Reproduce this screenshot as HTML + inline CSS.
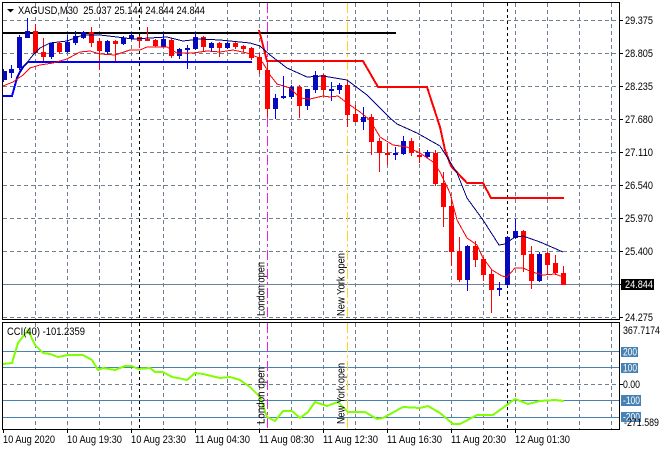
<!DOCTYPE html>
<html><head><meta charset="utf-8"><title>XAGUSD,M30</title>
<style>
html,body{margin:0;padding:0;background:#fff;width:660px;height:450px;overflow:hidden}
svg{display:block}
text{font-family:"Liberation Sans",sans-serif;font-size:11px;fill:#000}
.c{shape-rendering:crispEdges}
</style></head><body>
<svg width="660" height="450" viewBox="0 0 660 450" xmlns="http://www.w3.org/2000/svg">
<rect width="660" height="450" fill="#fff"/>
<!-- grid -->
<g class="c" fill="none" stroke="#708090" stroke-dasharray="4 3">
<path d="M35.5 3V319M67.5 3V319M99.5 3V319M131.5 3V319M163.5 3V319M195.5 3V319M227.5 3V319M259.5 3V319M291.5 3V319M323.5 3V319M355.5 3V319M387.5 3V319M419.5 3V319M451.5 3V319M483.5 3V319M515.5 3V319M547.5 3V319M579.5 3V319M611.5 3V319"/>
<path d="M3 20.500H619M3 53.500H619M3 86.500H619M3 119.500H619M3 152.500H619M3 185.500H619M3 218.500H619M3 251.500H619M3 317.500H619"/>
<path d="M35.500 323V429M67.500 323V429M99.500 323V429M131.500 323V429M163.500 323V429M195.500 323V429M227.500 323V429M259.500 323V429M291.500 323V429M323.500 323V429M355.500 323V429M387.500 323V429M419.500 323V429M451.500 323V429M483.500 323V429M515.500 323V429M547.500 323V429M579.500 323V429M611.500 323V429"/>
<path d="M3 384.500H619"/>
</g>
<path class="c" d="M3 284.500H619" stroke="#708090" fill="none"/>
<path class="c" d="M3 351.500H619M3 367.500H619M3 400.500H619M3 417.500H619" stroke="#4682b4" fill="none"/>
<!-- session lines -->
<g class="c" fill="none">
<path d="M139.500 3V319M139.500 323V429M507.500 3V319M507.500 323V429" stroke="#000" stroke-dasharray="3 3"/>
<path d="M267.500 3V319M267.500 323V429" stroke="#e81ee8" stroke-dasharray="10 3 3 3"/>
<path d="M347.500 3V319M347.500 323V429" stroke="#ffd21e" stroke-dasharray="10 3 3 3"/>
</g>
<!-- trend lines -->
<path class="c" d="M3 32H396V34H3z" fill="#000"/>
<!-- candles -->
<g class="c">
<path fill="none" stroke="#0000ff" d="M3.500 69V82M11.500 65V78M19.500 35V70M27.500 18V38M51.500 43V59M67.500 35V53M75.500 31V45M83.500 31V39M107.500 40V54M123.500 36V45M131.500 33V40M163.500 33V47M179.500 48V59M187.500 45V69M195.500 33V50M211.500 42V52M227.500 42V49M275.500 94V119M283.500 76V99M291.500 85V99M307.500 89V110M315.500 71V93M331.500 82V101M339.500 83V94M363.500 107V130M395.500 147V160M403.500 136V155M427.500 150V158M467.500 245V291M499.500 282V296M507.500 236V286M515.500 219V239M539.500 252V282"/>
<path fill="#0808c0" d="M3 71h4v9h-4zM9 69h5v4h-5zM17 37h5v31h-5zM25 31h5v7h-5zM49 43h5v14h-5zM65 42h5v10h-5zM73 36h5v7h-5zM81 32h5v6h-5zM105 41h5v11h-5zM121 38h5v6h-5zM129 35h5v4h-5zM161 39h5v8h-5zM177 49h5v7h-5zM185 48h5v2h-5zM193 37h5v12h-5zM209 43h5v5h-5zM225 43h5v5h-5zM273 98h5v11h-5zM281 96h5v2h-5zM289 87h5v10h-5zM305 89h5v17h-5zM313 75h5v15h-5zM329 89h5v2h-5zM337 85h5v5h-5zM361 117h5v5h-5zM393 153h5v2h-5zM401 141h5v13h-5zM425 152h5v5h-5zM465 246h5v34h-5zM497 288h5v2h-5zM505 237h5v48h-5zM513 231h5v7h-5zM537 254h5v27h-5z"/>
<path fill="none" stroke="#ff0000" d="M35.500 24V54M43.500 38V63M59.500 42V54M91.500 27V47M99.500 38V70M115.500 40V63M139.500 36V48M147.500 27V41M155.500 39V47M171.500 38V58M203.500 36V52M219.500 42V57M235.500 42V49M243.500 45V52M251.500 47V60M259.500 53V74M267.500 63V117M299.500 85V118M323.500 74V95M347.500 80V127M355.500 105V122M371.500 114V155M379.500 138V172M387.500 143V165M411.500 138V156M419.500 148V163M435.500 150V186M443.500 172V227M451.500 197V266M459.500 237V282M475.500 241V267M483.500 257V281M491.500 269V313M523.500 230V272M531.500 246V289M547.500 252V275M555.500 255V275M563.500 266V285"/>
<path fill="#ff0000" d="M33 31h5v22h-5zM41 52h5v5h-5zM57 43h5v9h-5zM89 32h5v11h-5zM97 41h5v10h-5zM113 41h5v3h-5zM137 37h5v4h-5zM145 39h5v2h-5zM153 40h5v6h-5zM169 40h5v16h-5zM201 37h5v10h-5zM217 43h5v5h-5zM233 43h5v4h-5zM241 46h5v3h-5zM249 48h5v10h-5zM257 57h5v13h-5zM265 70h5v39h-5zM297 87h5v19h-5zM321 75h5v15h-5zM345 85h5v30h-5zM353 114h5v8h-5zM369 117h5v25h-5zM377 141h5v12h-5zM385 153h5v2h-5zM409 141h5v12h-5zM417 155h5v2h-5zM433 153h5v31h-5zM441 183h5v24h-5zM449 206h5v46h-5zM457 251h5v29h-5zM473 246h5v14h-5zM481 259h5v16h-5zM489 274h5v16h-5zM521 231h5v24h-5zM529 254h5v27h-5zM545 253h5v12h-5zM553 263h5v10h-5zM561 273h5v12h-5z"/>
</g>
<!-- envelope thick -->
<g class="c" fill="none">
<path d="M3 96H12L17 78L22 68L28 62H252" stroke="#0000ff" stroke-width="2"/>
<path d="M259 30L267 61H363L378 87H427L440 127L445 150L451 166L467 183H483L491 198H564" stroke="#ff0000" stroke-width="2"/>
<!-- MAs -->
<path d="M17 78L23 68L33 55L40 48L50 43L67 41L83 35L100 35L117 37L133 39L150 38L167 37L183 41L200 39L220 40L230 41L250 43L260 46L270 55L287 68L307 77L323 76L347 80L367 95L390 118L397 124L417 133L440 146L447 157L457 173L467 198L483 220L499 245L505 244L515 237L523 236L540 242L563 252" stroke="#000080"/>
<path d="M3 86L13 82L23 75L30 68L40 65L53 63L67 59L80 52L90 51L100 54L115 55L130 50L140 50L147 47L167 47L177 53L193 53L207 51L220 52L233 50L247 53L257 57L263 63L270 75L277 84L290 88L300 98L310 99L323 96L330 97L338 96L347 103L360 112L370 120L380 137L393 145L407 147L420 153L433 162L440 172L450 193L457 220L467 238L477 245L483 258L492 270L502 276L507 277L515 268L523 268L532 272L543 275L555 274L563 277" stroke="#ff0000"/>
<!-- CCI -->
<path d="M3 364L12 363L18 343L28 330L35 345L43 353L50 354L58 357L68 355L83 355L92 360L98 370L103 368L115 370L125 366L132 366L138 369L150 368L155 372L163 372L172 377L178 378L187 380L195 373L203 374L220 378L230 377L240 380L250 387L260 397L267 417L275 421L283 411L292 411L300 418L308 412L315 402L327 406L338 402L348 412L365 412L377 419L383 418L403 407L420 408L428 406L440 413L453 424L460 424L477 415L493 415L515 399L528 404L540 401L555 400L564 401" stroke="#7fff00" stroke-width="2"/>
</g>
<!-- frame -->
<g class="c" fill="none" stroke="#000">
<path d="M2.500 2.500H619.500V319.500H2.500zM2.500 322.500H619.500V429.500H2.500z"/>
<path d="M620 20.500h3M620 53.500h3M620 86.500h3M620 119.500h3M620 152.500h3M620 185.500h3M620 218.500h3M620 251.500h3M620 284.500h3M620 317.500h3M620 384.500h3"/>
<path d="M3.500 430v3M67.500 430v3M131.500 430v3M195.500 430v3M259.500 430v3M323.500 430v3M387.500 430v3M451.500 430v3M515.500 430v3"/>
</g>
<!-- title -->
<path d="M7 9h7l-3.500 3.500z" fill="#000"/>
<text x="18" y="14" textLength="187" lengthAdjust="spacingAndGlyphs" xml:space="preserve">XAGUSD,M30  25.037 25.144 24.844 24.844</text>
<text x="7" y="335" textLength="78" lengthAdjust="spacingAndGlyphs">CCI(40) -101.2359</text>
<!-- price axis -->
<g>
<text x="625" y="24" textLength="28" lengthAdjust="spacingAndGlyphs">29.375</text>
<text x="625" y="57" textLength="28" lengthAdjust="spacingAndGlyphs">28.805</text>
<text x="625" y="90" textLength="28" lengthAdjust="spacingAndGlyphs">28.235</text>
<text x="625" y="123" textLength="28" lengthAdjust="spacingAndGlyphs">27.680</text>
<text x="625" y="156" textLength="28" lengthAdjust="spacingAndGlyphs">27.110</text>
<text x="625" y="189" textLength="28" lengthAdjust="spacingAndGlyphs">26.540</text>
<text x="625" y="222" textLength="28" lengthAdjust="spacingAndGlyphs">25.970</text>
<text x="625" y="255" textLength="28" lengthAdjust="spacingAndGlyphs">25.400</text>
<rect class="c" x="621" y="279" width="33" height="11" fill="#000"/>
<text x="625" y="288" textLength="28" lengthAdjust="spacingAndGlyphs" style="fill:#fff">24.844</text>
<text x="625" y="321" textLength="28" lengthAdjust="spacingAndGlyphs">24.275</text>
</g>
<!-- CCI axis -->
<g>
<text x="623" y="334" textLength="37" lengthAdjust="spacingAndGlyphs">367.7174</text>
<rect class="c" x="621" y="347" width="17" height="10" fill="#4682b4"/>
<text x="623" y="355.500" textLength="14" lengthAdjust="spacingAndGlyphs" style="fill:#fff">200</text>
<rect class="c" x="621" y="363" width="17" height="10" fill="#4682b4"/>
<text x="623" y="371.500" textLength="14" lengthAdjust="spacingAndGlyphs" style="fill:#fff">100</text>
<text x="623" y="388" textLength="17" lengthAdjust="spacingAndGlyphs">0.00</text>
<rect class="c" x="621" y="395" width="20" height="11" fill="#4682b4"/>
<text x="623" y="404" textLength="17" lengthAdjust="spacingAndGlyphs" style="fill:#fff">-100</text>
<rect class="c" x="621" y="412" width="20" height="10" fill="#4682b4"/>
<text x="623" y="420.500" textLength="17" lengthAdjust="spacingAndGlyphs" style="fill:#fff">-200</text>
<text x="624" y="426" textLength="35" lengthAdjust="spacingAndGlyphs">-271.589</text>
</g>
<!-- time axis -->
<g>
<text x="3" y="443" textLength="52" lengthAdjust="spacingAndGlyphs">10 Aug 2020</text>
<text x="67" y="443" textLength="55" lengthAdjust="spacingAndGlyphs">10 Aug 19:30</text>
<text x="131" y="443" textLength="55" lengthAdjust="spacingAndGlyphs">10 Aug 23:30</text>
<text x="195" y="443" textLength="55" lengthAdjust="spacingAndGlyphs">11 Aug 04:30</text>
<text x="259" y="443" textLength="55" lengthAdjust="spacingAndGlyphs">11 Aug 08:30</text>
<text x="323" y="443" textLength="55" lengthAdjust="spacingAndGlyphs">11 Aug 12:30</text>
<text x="387" y="443" textLength="55" lengthAdjust="spacingAndGlyphs">11 Aug 16:30</text>
<text x="451" y="443" textLength="55" lengthAdjust="spacingAndGlyphs">11 Aug 20:30</text>
<text x="515" y="443" textLength="55" lengthAdjust="spacingAndGlyphs">12 Aug 01:30</text>
</g>
<!-- vertical labels -->
<text transform="translate(264.500 316) rotate(-90)" textLength="54" lengthAdjust="spacingAndGlyphs">London open</text>
<text transform="translate(344.500 316) rotate(-90)" textLength="63" lengthAdjust="spacingAndGlyphs">New York open</text>
<text transform="translate(264.500 424) rotate(-90)" textLength="57" lengthAdjust="spacingAndGlyphs">London open</text>
<text transform="translate(344.500 424) rotate(-90)" textLength="61" lengthAdjust="spacingAndGlyphs">New York open</text>
</svg>
</body></html>
